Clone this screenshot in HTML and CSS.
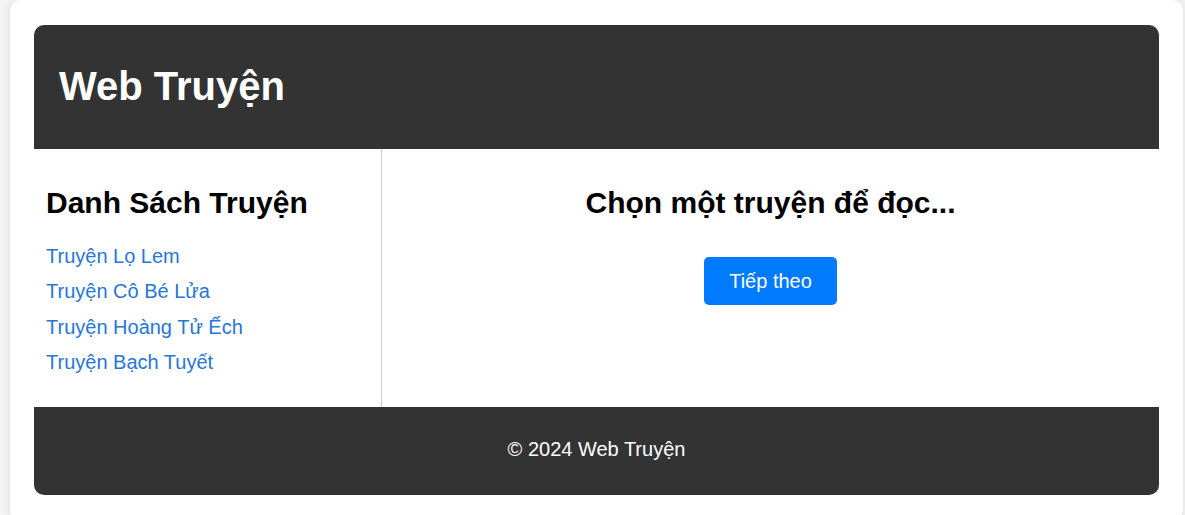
FILE: index.html
```html
<!DOCTYPE html>
<html lang="vi">
<head>
<meta charset="utf-8">
<title>Web Truyện</title>
<link rel="stylesheet" href="styles.css">
</head>
<body>
<div class="container">
  <header class="site-header">
    <h1 class="site-title">Web Truyện</h1>
  </header>
  <main class="main">
    <aside class="sidebar">
      <h2 class="sidebar-title">Danh Sách Truyện</h2>
      <ul class="story-list">
        <li><a href="#">Truyện Lọ Lem</a></li>
        <li><a href="#">Truyện Cô Bé Lửa</a></li>
        <li><a href="#">Truyện Hoàng Tử Ếch</a></li>
        <li><a href="#">Truyện Bạch Tuyết</a></li>
      </ul>
    </aside>
    <section class="content">
      <h2 class="content-title">Chọn một truyện để đọc...</h2>
      <button class="next-btn" type="button">Tiếp theo</button>
    </section>
  </main>
  <footer class="site-footer">
    <p class="footer-text">© 2024 Web Truyện</p>
  </footer>
</div>
</body>
</html>
```

FILE: styles.css
```css
html, body {
  margin: 0;
  padding: 0;
}
body {
  background: #f4f4f4;
  font-family: "Liberation Sans", Arial, sans-serif;
  color: #000;
}
.container {
  box-sizing: border-box;
  width: 1173px;
  margin: 0 2px 0 10px;
  padding: 25px 24px;
  background: #fff;
  border-radius: 10px;
  box-shadow: 0 0 10px rgba(0, 0, 0, 0.1);
}
.site-header {
  background: #333;
  color: #fff;
  padding: 38px 25px 40px;
  border-radius: 10px 10px 0 0;
}
.site-title {
  margin: 0;
  font-size: 40px;
  font-weight: bold;
  line-height: 46px;
}
.main {
  display: grid;
  grid-template-columns: 348px 1fr;
}
.sidebar {
  box-sizing: border-box;
  border-right: 1px solid #ccc;
  padding: 36px 12px 21px 12px;
}
.sidebar-title,
.content-title {
  margin: 0 0 25px;
  font-size: 30px;
  line-height: 35px;
  font-weight: bold;
}
.story-list {
  list-style: none;
  margin: 0;
  padding: 0;
}
.story-list li {
  margin: 0 0 12px;
  font-size: 20px;
  line-height: 23.3px;
}
.story-list a {
  color: #2676d9;
  text-decoration: none;
}
.content {
  padding: 36px 20px 0;
  display: flex;
  flex-direction: column;
  align-items: center;
}
.content-title {
  margin-bottom: 37px;
  text-align: center;
}
.next-btn {
  font-family: "Liberation Sans", Arial, sans-serif;
  font-size: 20px;
  line-height: 24px;
  color: #fff;
  background: #007bff;
  border: none;
  border-radius: 5px;
  padding: 12px 25px;
  cursor: pointer;
}
.site-footer {
  background: #333;
  color: #fff;
  text-align: center;
  padding: 31px 20px 34px;
  border-radius: 0 0 10px 10px;
}
.footer-text {
  margin: 0;
  font-size: 20px;
  line-height: 23px;
}
```
